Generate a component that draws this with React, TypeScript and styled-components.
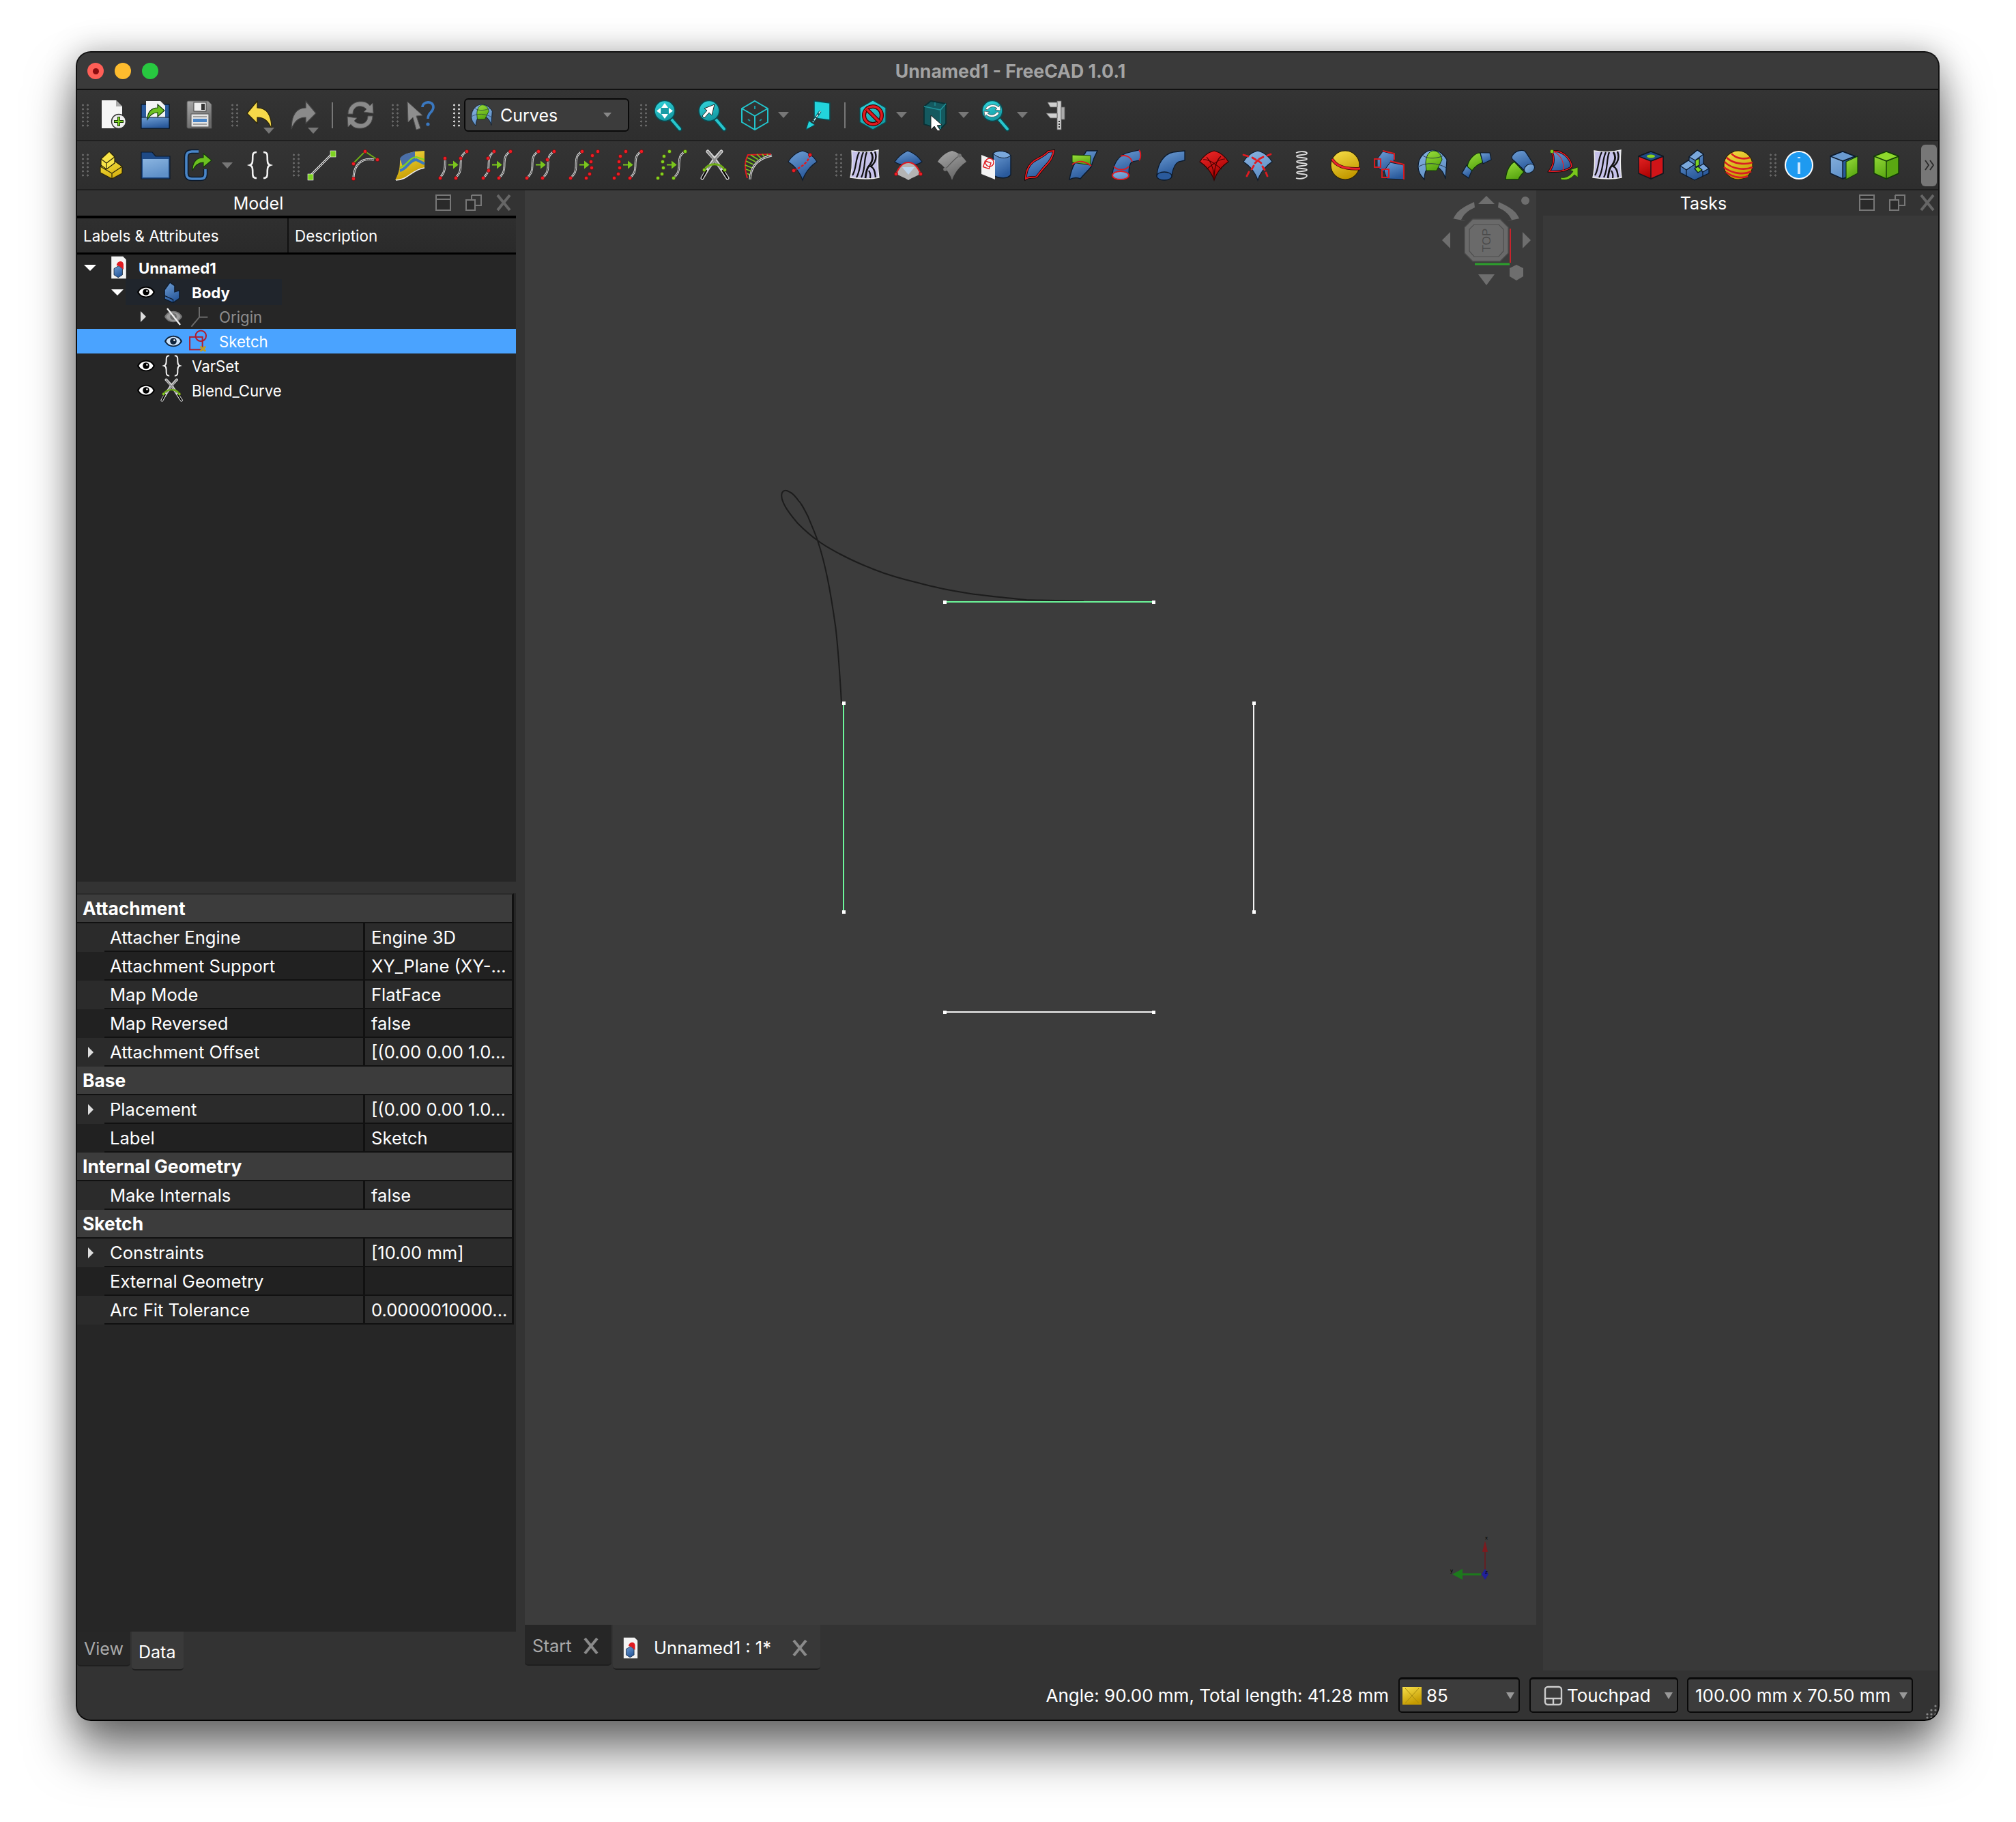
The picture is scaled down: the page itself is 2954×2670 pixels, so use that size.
import React from 'react';
import styled, { createGlobalStyle } from 'styled-components';

const GlobalStyle = createGlobalStyle`
    html, body {
        margin: 0;
        padding: 0;
        background: #fff;
    }
    body {
        font-family: Inter, "Liberation Sans", sans-serif;
        color: #fff;
    }
`;

const Page = styled.div`
    width: 2954px;
    height: 2670px;
    padding: 75px 0 0 111px;
    box-sizing: border-box;
    overflow: hidden;
`;

const Window = styled.div`
    position: relative;
    width: 2731px;
    height: 2447px;
    box-sizing: border-box;
    display: flex;
    flex-direction: column;
    background: #333;
    border: 2px solid #111;
    border-bottom-color: #000;
    border-radius: 22px;
    overflow: hidden;
`;

const Shadow = styled.div`
    width: 2731px;
    height: 2447px;
    border-radius: 22px;
    box-shadow: 0 44px 70px rgba(0, 0, 0, 0.54), 0 0 46px rgba(0, 0, 0, 0.26);
`;

const TitleBar = styled.div`
    height: 53px;
    flex: none;
    display: flex;
    align-items: center;
    justify-content: center;
    position: relative;
    padding-left: 8px;
    background: #3a3a3a;
    border-bottom: 2px solid #111;
`;

const TitleText = styled.div`
    font-size: 26.6px;
    font-weight: 700;
    color: #a3a3a3;
`;

const Lights = styled.div`
    position: absolute;
    left: 15px;
    top: 15px;
    display: flex;
    gap: 16px;
`;

const Light = styled.div<{ $c: string }>`
    width: 24px;
    height: 24px;
    border-radius: 50%;
    background: ${(p) => p.$c};
    display: flex;
    align-items: center;
    justify-content: center;
`;

const LightDot = styled.div`
    width: 9px;
    height: 9px;
    border-radius: 50%;
    background: #8c0c10;
`;

const Toolbar = styled.div<{ $h: number }>`
    height: ${(p) => p.$h}px;
    flex: none;
    display: flex;
    align-items: center;
    background: linear-gradient(#343434, #2e2e2e);
    border-bottom: 2px solid #1f1f1f;
    box-sizing: border-box;
    padding-right: 2px;
`;

const Grip = styled.div<{ $ml?: number; $bright?: boolean }>`
    flex: none;
    width: 10px;
    height: 36px;
    margin: 0 1px 0 ${(p) => p.$ml ?? 16}px;
    background-image: radial-gradient(circle at 1.5px 3px, ${(p) => (p.$bright ? '#ccc' : '#666')} 1.4px, transparent 1.7px),
        radial-gradient(circle at 8.5px 3px, ${(p) => (p.$bright ? '#ccc' : '#666')} 1.4px, transparent 1.7px);
    background-size: 10px 6px;
`;

const ToolButton = styled.div<{ $w?: number; $ml?: number }>`
    flex: none;
    position: relative;
    width: ${(p) => p.$w ?? 64}px;
    margin-left: ${(p) => p.$ml ?? 0}px;
    height: 44px;
    display: flex;
    align-items: center;
    justify-content: center;
`;

const Icon = styled.svg<{ $s?: number }>`
    width: ${(p) => p.$s ?? 44}px;
    height: ${(p) => p.$s ?? 44}px;
    flex: none;
    overflow: visible;
`;

const DropSlot = styled.div<{ $w?: number }>`
    flex: none;
    width: ${(p) => p.$w ?? 26}px;
    display: flex;
`;

const DropArrow = styled.div`
    width: 0;
    height: 0;
    margin-left: 2px;
    border-left: 8px solid transparent;
    border-right: 8px solid transparent;
    border-top: 9px solid #777;
`;

const OverArrow = styled(DropArrow)<{ $l: number }>`
    position: absolute;
    left: ${(p) => p.$l}px;
    top: 40px;
    margin: 0;
`;

const VSep = styled.div<{ $ml: number; $mr: number }>`
    flex: none;
    width: 2px;
    height: 38px;
    background: #777;
    margin: 0 ${(p) => p.$mr}px 0 ${(p) => p.$ml}px;
`;

const WorkbenchCombo = styled.div`
    flex: none;
    width: 242px;
    height: 49px;
    margin-left: 5px;
    box-sizing: border-box;
    display: flex;
    align-items: center;
    gap: 11px;
    padding: 0 10px 0 8px;
    background: #3c3c3c;
    border: 2px solid #0a0a0a;
    border-radius: 6px;
    font-size: 25px;
`;

const ComboLabel = styled.div`
    flex: 1;
`;

const ComboArrow = styled.div`
    width: 0;
    height: 0;
    margin-right: 14px;
    border-left: 6px solid transparent;
    border-right: 6px solid transparent;
    border-top: 7px solid #888;
`;

const OverflowButton = styled.div`
    margin-left: auto;
    width: 23px;
    height: 61px;
    border-radius: 6px;
    background: #777;
    display: flex;
    align-items: center;
    justify-content: center;
`;

const Main = styled.div`
    flex: 1;
    min-height: 0;
    display: flex;
    margin-bottom: 72px;
`;

const LeftDock = styled.div`
    flex: none;
    width: 643px;
    display: flex;
    flex-direction: column;
`;

const CenterColumn = styled.div`
    flex: none;
    width: 1482px;
    margin-left: 13px;
    display: flex;
    flex-direction: column;
`;

const RightDock = styled.div`
    flex: none;
    width: 579px;
    margin-left: 10px;
    display: flex;
    flex-direction: column;
`;

const DockHeader = styled.div`
    flex: none;
    height: 37px;
    position: relative;
    display: flex;
    align-items: center;
    justify-content: center;
    font-size: 25px;
`;

const DockTitle = styled.div<{ $dx: number }>`
    margin-left: ${(p) => p.$dx}px;
`;

const DockButtons = styled.div<{ $r: number }>`
    position: absolute;
    right: ${(p) => p.$r}px;
    top: 6px;
    display: flex;
    gap: 20px;
`;

const TreeHeader = styled.div`
    flex: none;
    height: 50px;
    box-sizing: content-box;
    display: flex;
    border-top: 4px solid #000;
    border-bottom: 3px solid #000;
    background: linear-gradient(#2f2f2f, #2a2a2a);
    font-size: 22.4px;
`;

const TreeHeaderCell = styled.div<{ $w?: number }>`
    width: ${(p) => (p.$w ? `${p.$w}px` : 'auto')};
    flex: ${(p) => (p.$w ? 'none' : '1')};
    padding-left: 9px;
    box-sizing: border-box;
    display: flex;
    align-items: center;
    border-right: ${(p) => (p.$w ? '2px solid #111' : 'none')};
`;

const Tree = styled.div`
    flex: none;
    height: 919px;
    box-sizing: border-box;
    padding-top: 1px;
    background: #262626;
`;

const TreeRow = styled.div<{ $sel?: boolean }>`
    height: 36px;
    display: flex;
    align-items: center;
    background: ${(p) => (p.$sel ? '#4aa3ff' : 'transparent')};
    font-size: 22.2px;
`;

const TreeHighlight = styled.div<{ $on?: boolean }>`
    display: flex;
    align-items: center;
    height: 38px;
    width: ${(p) => (p.$on ? '229px' : 'auto')};
    background: ${(p) => (p.$on ? '#20252c' : 'transparent')};
`;

const ArrowSlot = styled.div<{ $ml: number }>`
    flex: none;
    width: 24px;
    margin-left: ${(p) => p.$ml}px;
    display: flex;
    justify-content: center;
`;

const TriDown = styled.div`
    width: 0;
    height: 0;
    border-left: 9px solid transparent;
    border-right: 9px solid transparent;
    border-top: 9px solid #fff;
`;

const TriRight = styled.div`
    width: 0;
    height: 0;
    border-top: 8px solid transparent;
    border-bottom: 8px solid transparent;
    border-left: 8px solid #ddd;
`;

const EyeSlot = styled.div<{ $ml: number }>`
    flex: none;
    width: 24px;
    margin-left: ${(p) => p.$ml}px;
    display: flex;
    justify-content: center;
`;

const TreeIconSlot = styled.div<{ $ml: number }>`
    flex: none;
    width: 36px;
    margin-left: ${(p) => p.$ml}px;
    display: flex;
    justify-content: center;
`;

const TreeLabel = styled.div<{ $bold?: boolean; $dim?: boolean }>`
    margin-left: 11px;
    font-weight: ${(p) => (p.$bold ? 700 : 400)};
    color: ${(p) => (p.$dim ? '#8c8c8c' : '#fff')};
`;

const PropPanel = styled.div`
    flex: 1;
    min-height: 0;
    margin-top: 17px;
    background: #262626;
`;

const PropTable = styled.div`
    width: 640px;
    box-sizing: border-box;
    border-top: 2px solid #2a2a2a;
    border-right: 3px solid #111;
    font-size: 25.6px;
`;

const GroupRow = styled.div`
    height: 42px;
    box-sizing: border-box;
    padding-left: 8px;
    display: flex;
    align-items: center;
    font-weight: 700;
    font-size: 26.4px;
    background: #3c3c3c;
    border-bottom: 2px solid #111;
`;

const PropRow = styled.div<{ $alt: boolean }>`
    height: 42px;
    display: flex;
    background: ${(p) => (p.$alt ? '#2b2b2b' : '#212121')};
`;

const PropGutter = styled.div`
    flex: none;
    width: 40px;
    display: flex;
    align-items: center;
    justify-content: center;
`;

const PropName = styled.div`
    flex: none;
    width: 382px;
    box-sizing: border-box;
    padding-left: 8px;
    display: flex;
    align-items: center;
    border-bottom: 2px solid #111;
    border-right: 3px solid #111;
`;

const PropValue = styled.div`
    flex: 1;
    padding-left: 9px;
    display: flex;
    align-items: center;
    white-space: nowrap;
    overflow: hidden;
    border-bottom: 2px solid #111;
`;

const TabStrip = styled.div`
    flex: none;
    height: 57px;
    display: flex;
    align-items: flex-start;
    gap: 2px;
`;

const DockTab = styled.div<{ $active?: boolean; $w: number }>`
    width: ${(p) => p.$w}px;
    height: ${(p) => (p.$active ? 57 : 51)}px;
    box-sizing: border-box;
    display: flex;
    align-items: center;
    padding-left: 10px;
    padding-top: ${(p) => (p.$active ? 4 : 0)}px;
    background: ${(p) => (p.$active ? '#3a3a3a' : '#272727')};
    border-bottom: 2px solid #1f1f1f;
    border-radius: 0 0 5px 5px;
    color: ${(p) => (p.$active ? '#fff' : '#aaa')};
    font-size: 25px;
`;

const Viewport = styled.div`
    flex: none;
    height: 2102px;
    position: relative;
    background: #3c3c3c;
`;

const SketchCanvas = styled.svg`
    display: block;
    width: 1482px;
    height: 2102px;
`;

const NavCubeBox = styled.svg`
    position: absolute;
    right: 1px;
    top: 4px;
    width: 145px;
    height: 150px;
`;

const AxisBox = styled.svg`
    position: absolute;
    left: 1350px;
    top: 1965px;
    width: 70px;
    height: 75px;
`;

const CenterTabs = styled.div`
    flex: none;
    height: 67px;
    display: flex;
    align-items: flex-start;
    gap: 2px;
`;

const DocTab = styled.div<{ $active?: boolean; $w: number }>`
    width: ${(p) => p.$w}px;
    height: ${(p) => (p.$active ? 66 : 60)}px;
    box-sizing: border-box;
    display: flex;
    align-items: center;
    padding: 3px 18px 0 ${(p) => (p.$active ? 10 : 11)}px;
    background: ${(p) => (p.$active ? '#383838' : '#262626')};
    border-bottom: 2px solid #1f1f1f;
    border-radius: 0 0 5px 5px;
    color: ${(p) => (p.$active ? '#fff' : '#aaa')};
    font-size: 25.6px;
`;

const DocTabLabel = styled.div<{ $ml?: number }>`
    flex: 1;
    margin-left: ${(p) => p.$ml ?? 0}px;
    white-space: nowrap;
`;

const TaskPane = styled.div`
    flex: none;
    height: 2132px;
    background: #393939;
`;

const StatusBar = styled.div`
    position: absolute;
    left: 0;
    right: 0;
    bottom: 0;
    height: 72px;
    display: flex;
    align-items: center;
    justify-content: flex-end;
    padding-right: 37px;
    font-size: 26px;
`;

const StatusText = styled.div`
    margin-right: 14px;
`;

const StatusCombo = styled.div<{ $w: number; $ml: number; $pl?: number }>`
    width: ${(p) => p.$w}px;
    margin-left: ${(p) => p.$ml}px;
    height: 52px;
    box-sizing: border-box;
    display: flex;
    align-items: center;
    gap: 5px;
    padding: 0 6px 0 ${(p) => p.$pl ?? 4}px;
    background: #3c3c3c;
    border: 2px solid #0a0a0a;
    border-top-width: 3px;
    border-radius: 5px;
`;

const ComboValue = styled.div<{ $pl?: number }>`
    flex: 1;
    padding-left: ${(p) => p.$pl ?? 0}px;
    white-space: nowrap;
`;

const StatusArrow = styled.div`
    width: 0;
    height: 0;
    border-left: 6px solid transparent;
    border-right: 6px solid transparent;
    border-top: 10px solid #999;
`;

const ResizeGrip = styled.svg`
    position: absolute;
    right: 0;
    bottom: 0;
    width: 26px;
    height: 26px;
`;

const HiddenDefs = styled.svg`
    position: absolute;
    width: 0;
    height: 0;
`;

const grads: [string, string, string][] = [
    ['gBlue', '#6f9fd6', '#2a5a9c'],
    ['gLight', '#8ab4e0', '#5f90c8'],
    ['gGreen', '#9adf3c', '#5aa812'],
    ['gYellow', '#f8e04a', '#c49a00'],
    ['gPart', '#f8e448', '#d8b410'],
    ['gRed', '#f02a2a', '#a80000'],
    ['gGray', '#a8a8a8', '#6a6a6a'],
    ['gCyan', '#34d8de', '#149aa4'],
];

const Defs = () => (
    <HiddenDefs>
        <defs>
            {grads.map(([id, a, b]) => (
                <linearGradient key={id} id={id} x1="0" y1="0" x2="0.4" y2="1">
                    <stop offset="0" stopColor={a} />
                    <stop offset="1" stopColor={b} />
                </linearGradient>
            ))}
        </defs>
    </HiddenDefs>
);

const DK = '#0c1a2c';
const BLADE = 'M22 1 C30 3 38 9 43 17 C34 23 26 32 22 44 C18 32 10 23 1 17 C6 9 14 3 22 1Z';

const Wire = ({ d }: { d: string }) => (
    <>
        <path d={d} fill="none" stroke="#e4e4e4" strokeWidth={2.8} />
        <path d={d} fill="none" stroke="#333" strokeWidth={1} />
    </>
);

const Pt = ({ x, y, c = '#ee1c24' }: { x: number; y: number; c?: string }) => (
    <circle cx={x} cy={y} r={2.7} fill={c} stroke="#3a0a0a" strokeWidth={0.5} />
);

const GreenArrow = () => (
    <path d="M15 21.5 H24 M23 17.5 L28 21.5 L23 25.5Z" stroke="#7ac61c" strokeWidth={2} fill="#7ac61c" />
);

const LEFT_S = 'M2 41 C9 34 10 30 10 23 C10 12 11 6 19 2';
const RIGHT_S = 'M25 41 C32 34 33 30 33 23 C33 12 34 6 42 2';

const approx = (wires: string[], pts: number[][], c?: string) => (
    <>
        {wires.map((d) => (
            <Wire key={d} d={d} />
        ))}
        <GreenArrow />
        {pts.map(([x, y]) => (
            <Pt key={`${x}-${y}`} x={x} y={y} c={c} />
        ))}
    </>
);

const Cube = ({ top, left, right, s = DK }: { top: string; left: string; right: string; s?: string }) => (
    <g stroke={s} strokeWidth={1.4} strokeLinejoin="round">
        <path d="M22 2 L40 9 L40 34 L22 42 L4 34 L4 9Z" fill={left} />
        <path d="M22 16 L40 9 L40 34 L22 42Z" fill={right} />
        <path d="M22 2 L40 9 L22 16 L4 9Z" fill={top} />
    </g>
);

const Magnifier = ({ children }: { children?: React.ReactNode }) => (
    <>
        <path d="M30 28 L42 42" stroke="#0b4a50" strokeWidth={7} strokeLinecap="round" />
        <path d="M30 28 L42 42" stroke="#28c6ce" strokeWidth={4} strokeLinecap="round" />
        <ellipse cx="20" cy="15.5" rx="15" ry="15" fill="url(#gCyan)" stroke="#0b4a50" strokeWidth={1.6} />
        {children}
    </>
);

const Sphere = ({ children }: { children?: React.ReactNode }) => (
    <>
        <circle cx="22" cy="22" r="21" fill="url(#gYellow)" stroke="#2c2408" strokeWidth={1.2} />
        {children}
    </>
);

const Zebra = () => (
    <>
        <path
            d="M3 1 C14 3 30 3 42 0 C41 14 41 28 43 40 C30 43 14 42 1 40 C4 28 4 14 3 1Z"
            fill="#c6c2ea"
            stroke="#eee"
            strokeWidth={1.4}
        />
        <g fill="none" stroke="#111" strokeWidth={2.2}>
            <path d="M14 3 C8 14 10 28 4 37" />
            <path d="M20 3 C14 16 17 28 10 40" />
            <path d="M25 3 C20 16 24 26 17 40" />
            <path d="M31 3 C36 10 33 18 27 25 C24 30 24 36 23 41" strokeWidth={2.8} />
            <path d="M37 2 C40 10 38 18 31 24 C36 26 37 32 38 40" strokeWidth={2.4} />
            <path d="M30 41 C31 36 30 33 28 30" />
        </g>
    </>
);

const Doc = () => (
    <>
        <path d="M8 1 H30 L36 7 V43 H8Z" fill="#f4f4f4" />
        <path d="M13 24 L22 19 L29 24 V36 L21 41 L13 36Z" fill="url(#gBlue)" stroke={DK} strokeWidth={1} />
        <path d="M18 18 C18 10 30 7 31 16 L31 26 L24 20Z" fill="#e01a20" />
    </>
);

const Braces = () => (
    <path
        d="M17 3 C9 3 12 10 11 16 C11 19 10 21 7 22 C10 23 11 25 11 28 C12 34 9 41 17 41 M27 3 C35 3 32 10 33 16 C33 19 34 21 37 22 C34 23 33 25 33 28 C32 34 35 41 27 41"
        fill="none"
        stroke="#f2f2f2"
        strokeWidth={2.6}
    />
);

const BlendX = () => (
    <>
        <g fill="none" strokeLinecap="round">
            <path d="M31 2 L21 13 L12 26 L3 41" stroke="#d8d8d8" strokeWidth={5} />
            <path d="M11 2 L21 13 L30 26 L40 41" stroke="#d8d8d8" strokeWidth={5} />
            <path d="M31 2 L12 26" stroke="#8e8e8e" strokeWidth={2.4} />
            <path d="M11 2 L30 26" stroke="#8e8e8e" strokeWidth={2.4} />
            <path d="M9 30 L3 41" stroke="#000" strokeWidth={2.4} />
            <path d="M33 30 L40 41" stroke="#000" strokeWidth={2.4} />
        </g>
        <path d="M6 29 C12 18 30 18 36 29" fill="none" stroke="#6fae16" strokeWidth={3} />
        <Pt x={6} y={29} c="#7ed321" />
        <Pt x={36} y={29} c="#7ed321" />
    </>
);

const ICONS: Record<string, React.ReactNode> = {
    new: (
        <>
            <path d="M8 0 H29 L38 9 V41 H8Z" fill="#f6f6f6" />
            <path d="M29 0 L38 9 H29Z" fill="#aaa" />
            <circle cx="33" cy="31" r="10.5" fill="#efefef" stroke="#333" strokeWidth={1.4} />
            <path d="M33 24 V38 M26 31 H40" stroke="#1a3a0a" strokeWidth={4} />
            <path d="M33 25 V37 M27 31 H39" stroke="#7ed321" strokeWidth={2.2} />
        </>
    ),
    open: (
        <>
            <rect x="2" y="6" width="41" height="35" fill="#2a5a9c" stroke={DK} strokeWidth={1.4} />
            <path d="M9 1 H30 L37 8 V27 H9Z" fill="#f4f4f4" />
            <path d="M2 25 H43 V41 H2Z" fill="url(#gBlue)" stroke={DK} strokeWidth={1.2} />
            <path
                d="M11 28 C11 16 18 11 26 11 V6 L36 15 L26 24 V18 C20 18 15 21 11 28Z"
                fill="#6cc020"
                stroke="#123a08"
                strokeWidth={1.2}
            />
        </>
    ),
    save: (
        <>
            <path d="M7 1 H36 L41 6 V41 H7 Q5 41 5 39 V3 Q5 1 7 1Z" fill="url(#gGray)" stroke="#555" />
            <rect x="15" y="3" width="18" height="13" fill="#eee" stroke="#444" />
            <rect x="26" y="5" width="5" height="9" fill="#333" />
            <rect x="11" y="20" width="26" height="19" fill="#e4e4e4" stroke="#555" />
            <path d="M14 24 H34 M14 35 H34" stroke="#888" strokeWidth={1.4} />
            <rect x="14" y="27" width="20" height="5" fill="#4a86c8" />
        </>
    ),
    undo: (
        <path
            d="M3 19 L18 1 V11 C32 11 39 22 39 42 C34 30 28 25 18 25 V34Z"
            fill="#f6d94a"
            stroke="#2a2408"
            strokeWidth={1.2}
            strokeLinejoin="round"
        />
    ),
    redo: (
        <path
            d="M42 19 L27 1 V11 C13 11 6 22 6 42 C11 30 17 25 27 25 V34Z"
            fill="#8a8a8a"
            stroke="#444"
            strokeWidth={1.2}
            strokeLinejoin="round"
        />
    ),
    refresh: (
        <g fill="#8a8a8a" stroke="#555" strokeWidth={1}>
            <path d="M4 20 C4 8 14 1 24 2 C30 2 34 5 36 8 L40 4 L41 19 L27 17 L31 13 C28 9 22 8 18 9 C13 11 11 15 11 20Z" />
            <path d="M40 23 C40 35 30 42 20 41 C14 41 10 38 8 35 L4 39 L3 24 L17 26 L13 30 C16 34 22 35 26 34 C31 32 33 28 33 23Z" />
        </g>
    ),
    whats: (
        <>
            <path d="M2 2 L24 22 L15 23 L21 41 L15 43 L10 25 L3 32Z" fill="#8e8e8e" stroke="#555" strokeWidth={1} />
            <path d="M24 10 C24 1 40 0 40 10 C40 18 32 17 32 27" fill="none" stroke="#3a78c0" strokeWidth={3.6} />
            <circle cx="32" cy="35" r="2.6" fill="#3a78c0" />
        </>
    ),
    fit: (
        <Magnifier>
            <path d="M20 4 L25 11 H15Z M20 27 L25 20 H15Z M8 15.5 L14 11 V20Z M32 15.5 L26 11 V20Z" fill="#fff" />
            <rect x="15" y="11" width="10" height="9" fill="#1a9aa4" />
        </Magnifier>
    ),
    zoomsel: (
        <Magnifier>
            <path d="M28 6 L13 12 L17 15 L10 23 L13 26 L20 18 L24 22Z" fill="#fff" stroke="#222" strokeWidth={1} />
        </Magnifier>
    ),
    isocube: (
        <g fill="none" stroke="#22c4cc" strokeWidth={2}>
            <path d="M22 1 L41 12 L41 32 L22 43 L3 32 L3 12Z" />
            <path d="M22 23 L3 12 M22 23 L41 12 M22 23 V43" />
            <path d="M22 8 V13 M12 28 L15 30 M32 28 L29 30" stroke="#1a9aa4" />
        </g>
    ),
    plane: (
        <>
            <path d="M18 1 L41 4 L41 29 L18 26Z" fill="#22d4dc" stroke="#0b4a50" strokeWidth={1.6} />
            <path d="M27 16 L16 32" stroke="#0b4a50" strokeWidth={3.6} />
            <path d="M27 16 L16 32" stroke="#d8f4f6" strokeWidth={1.6} strokeDasharray="4 2" />
            <path d="M6 43 L10 30 L19 36Z" fill="#22d4dc" stroke="#0b4a50" />
        </>
    ),
    draw: (
        <>
            <path d="M22 0 L41 11 L41 32 L22 43 L3 32 L3 11Z" fill="url(#gCyan)" stroke="#0b4a50" strokeWidth={1.4} />
            <circle cx="22" cy="22" r="13" fill="none" stroke="#400" strokeWidth={6} />
            <circle cx="22" cy="22" r="13" fill="none" stroke="#e01a20" strokeWidth={3.6} />
            <path d="M13 13 L31 31" stroke="#400" strokeWidth={6} />
            <path d="M13 13 L31 31" stroke="#e01a20" strokeWidth={3.6} />
        </>
    ),
    selbox: (
        <>
            <path d="M6 9 L16 1 L38 5 L38 34 L30 42 L6 35Z" fill="#14595f" stroke="#0a3034" strokeWidth={1.8} />
            <path d="M6 9 L30 14 L38 5 M30 14 V42" fill="none" stroke="#1f9098" strokeWidth={1.6} />
            <path d="M22 3 L22 8" stroke="#1f9098" strokeWidth={1.4} />
            <path d="M16 22 L32 36 L25 37 L30 44 L26 45 L21 38 L16 43Z" fill="#fff" stroke="#222" />
        </>
    ),
    zoomre: (
        <Magnifier>
            <path d="M10 13 C12 6 24 4 29 10 L31 7 L32 15 L24 14 L27 12 C23 8 16 9 13 14Z" fill="#fff" stroke="#333" strokeWidth={0.6} />
            <path d="M30 18 C28 25 16 27 11 21 L9 24 L8 16 L16 17 L13 19 C17 23 24 22 27 17Z" fill="#fff" stroke="#333" strokeWidth={0.6} />
        </Magnifier>
    ),
    measure: (
        <g fill="#cfcfcf" stroke="#666" strokeWidth={0.8}>
            <rect x="24" y="1" width="6" height="42" />
            <path d="M10 3 H24 V10 H14Z" />
            <path d="M8 19 H24 V26 H14Z" />
            <rect x="30" y="10" width="5" height="18" fill="#aaa" />
            <path d="M27 30 V41" stroke="#333" strokeWidth={2} strokeDasharray="2 2" />
        </g>
    ),
    part: (
        <g stroke="#2a2408" strokeWidth={1.2} strokeLinejoin="round">
            <path d="M6 24 L24 14 L38 24 L38 34 L23 42 L6 33Z" fill="url(#gPart)" />
            <path d="M6 24 L23 34 L38 24 M23 34 V42" fill="none" />
            <path d="M7 13 L19 2 L27 10 L27 19 L15 28 L7 22Z" fill="#f8e448" />
            <path d="M7 13 L15 19 L27 10 M15 19 V28" fill="none" />
        </g>
    ),
    group: (
        <>
            <path d="M2 3 H18 L23 9 H44 V42 H2Z" fill="#1e4a86" stroke={DK} strokeWidth={1.2} />
            <path d="M4 13 H42 V40 H4Z" fill="url(#gLight)" />
        </>
    ),
    link: (
        <>
            <path d="M22 2 H12 Q4 2 4 10 V34 Q4 42 12 42 H25 Q32 42 32 35 V28" fill="none" stroke={DK} strokeWidth={6.5} />
            <path d="M22 2 H12 Q4 2 4 10 V34 Q4 42 12 42 H25 Q32 42 32 35 V28" fill="none" stroke="#4a86c8" strokeWidth={3.6} />
            <path
                d="M13 30 C13 16 20 11 29 11 V5 L41 15 L29 25 V18 C22 18 17 22 13 30Z"
                fill="#6cc020"
                stroke="#123a08"
                strokeWidth={1.1}
            />
        </>
    ),
    braces: <Braces />,
    line: (
        <>
            <path d="M4 38 L36 6" stroke="#e8e8e8" strokeWidth={2.8} />
            <path d="M4 38 L36 6" stroke="#333" strokeWidth={1} />
            <rect x="34" y="1" width="8" height="9" fill="#7ed321" stroke="#fff" strokeWidth={0.6} />
            <rect x="1" y="35" width="8" height="9" fill="#7ed321" stroke="#fff" strokeWidth={0.6} />
        </>
    ),
    arc: (
        <>
            <path d="M3 20 L21 2 L39 14" fill="none" stroke="#6fae16" strokeWidth={1.8} />
            <path d="M4 42 C4 22 16 10 34 14" fill="none" stroke="#e4e4e4" strokeWidth={3} />
            <path d="M4 42 C4 22 16 10 34 14" fill="none" stroke="#333" strokeWidth={1} />
            <Pt x={4} y={20} />
            <Pt x={21} y={2} />
            <Pt x={39} y={14} />
            <Pt x={4} y={42} />
        </>
    ),
    surfcurve: (
        <>
            <path d="M8 16 C10 6 22 4 30 2 L44 1 V26 C26 26 22 44 1 44 C6 34 8 28 8 16Z" fill="url(#gYellow)" />
            <path d="M8 12 C14 4 24 4 30 2 L30 14 L12 24Z" fill="#4a6fa8" />
            <path d="M8 30 C18 28 22 14 32 14 L44 20" fill="none" stroke="#3a78c0" strokeWidth={4} />
            <path d="M8 25 C18 24 22 10 32 10 L44 14" fill="none" stroke="#7ed321" strokeWidth={2.2} />
            <path d="M2 44 C20 44 26 28 44 26" fill="none" stroke="#eee" strokeWidth={1.6} />
        </>
    ),
    ap1: approx(['M2 41 C8 35 11 30 10 12', RIGHT_S], [[3, 41], [10, 12], [26, 41], [33, 12], [42, 2]]),
    ap2: approx([LEFT_S, RIGHT_S], [[2, 41], [10, 30], [9, 12], [18, 2], [25, 41], [42, 2]]),
    ap3: approx([LEFT_S, RIGHT_S], [[2, 41], [19, 2], [25, 41], [32, 14], [42, 2]]),
    ap4: approx([LEFT_S], [[2, 41], [19, 2], [25, 41], [30, 35], [33, 26], [32, 17], [34, 8], [42, 2]]),
    ap5: approx([RIGHT_S], [[2, 41], [8, 35], [10, 26], [9, 17], [11, 9], [19, 2], [25, 41], [42, 2]]),
    ap6: approx([RIGHT_S], [[2, 41], [8, 35], [10, 26], [9, 17], [11, 9], [19, 2], [25, 41], [42, 2]], '#7ed321'),
    blend: <BlendX />,
    comb: (
        <>
            <path d="M5 41 C1 28 1 16 6 7 L40 6" fill="none" stroke="#e01a20" strokeWidth={2} />
            <g stroke="#7ac61c" strokeWidth={1.7}>
                <path d="M5 34 L11 38 M3 28 L11 31 M2 22 L12 26 M3 16 L14 21 M5 11 L17 17 M10 7 L21 14 M19 6 L25 12 M27 6 L30 10 M34 6 L35 8" />
            </g>
            <path d="M9 43 C10 24 20 12 41 8" fill="none" stroke="#e4e4e4" strokeWidth={3} />
            <path d="M9 43 C10 24 20 12 41 8" fill="none" stroke="#333" strokeWidth={1} />
        </>
    ),
    onsurf: (
        <>
            <path d={BLADE} fill="url(#gBlue)" stroke={DK} strokeWidth={1.2} />
            <path d="M33 7 C30 18 22 24 9 30" fill="none" stroke="#e01a20" strokeWidth={2.4} strokeDasharray="4 2" />
            <Pt x={33} y={7} />
            <Pt x={9} y={30} />
        </>
    ),
    zebra: <Zebra />,
    sectorA: (
        <>
            <path d="M21 1 C30 4 37 10 42 17 C34 24 10 24 2 17 C7 10 14 4 21 1Z" fill="url(#gBlue)" stroke={DK} strokeWidth={1.2} />
            <path d="M4 35 C8 25 14 18 22 18 C30 18 36 25 40 35 C34 38 28 40 22 44 C16 40 10 38 4 35Z" fill="#b4b4b4" />
            <path d="M13 25 H31 L22 36Z" fill="#bcd4ec" />
            <path d="M4 35 C8 25 14 18 22 18 C30 18 36 25 40 35" fill="none" stroke="#e01a20" strokeWidth={2.2} />
            <Pt x={4} y={35} />
            <Pt x={40} y={35} />
        </>
    ),
    sectorGray: (
        <>
            <path d={BLADE} fill="url(#gGray)" />
            <path d="M12 28 C18 22 26 12 33 8" fill="none" stroke="#555" strokeWidth={1.2} />
            <circle cx="33" cy="8" r="2.8" fill="#777" />
            <circle cx="12" cy="28" r="2.8" fill="#777" />
        </>
    ),
    sheetcyl: (
        <>
            <path d="M18 5 C24 -1 40 1 44 8 V36 C40 42 28 42 20 38Z" fill="url(#gBlue)" stroke={DK} strokeWidth={1.4} />
            <path d="M18 5 C24 -1 40 1 44 8 C36 14 26 12 18 5Z" fill="#7aa8dc" stroke={DK} strokeWidth={1} />
            <path d="M1 7 L21 15 V43 L1 35Z" fill="#f4f4f4" />
            <rect x="5" y="17" width="9" height="9" fill="none" stroke="#e01a20" strokeWidth={1.4} transform="rotate(18 9 21)" />
            <circle cx="13" cy="18" r="6" fill="none" stroke="#e01a20" strokeWidth={1.4} />
        </>
    ),
    leaf: (
        <>
            <path
                d="M2 42 C2 30 6 22 14 16 C24 10 30 8 35 2 L43 1 C42 8 38 16 32 22 C26 28 22 34 18 39 C14 41 8 38 2 42Z"
                fill="url(#gBlue)"
                stroke="#100"
                strokeWidth={3.4}
            />
            <path
                d="M2 42 C2 30 6 22 14 16 C24 10 30 8 35 2 L43 1 C42 8 38 16 32 22 C26 28 22 34 18 39 C14 41 8 38 2 42Z"
                fill="none"
                stroke="#ee1c24"
                strokeWidth={1.9}
            />
        </>
    ),
    band: (
        <>
            <path
                d="M27 1 L43 1 C38 10 36 16 34 24 C30 30 24 34 18 42 C14 40 8 40 2 43 C4 32 6 24 12 16 C18 12 24 8 27 1Z"
                fill="url(#gBlue)"
                stroke={DK}
                strokeWidth={1.4}
            />
            <path d="M6 7 L33 8 L33 22 L6 18Z" fill="url(#gGreen)" stroke="#123a08" />
            <path d="M6 21 C16 14 24 16 34 23" fill="none" stroke="#e01a20" strokeWidth={1.8} />
        </>
    ),
    ringpipe: (
        <>
            <path d="M1 36 C2 20 10 6 27 3 L40 0 C43 3 43 12 40 15 L30 17 C25 20 25 30 25 37Z" fill="url(#gBlue)" stroke={DK} strokeWidth={1.2} />
            <ellipse cx="13" cy="37" rx="12" ry="6" fill="url(#gLight)" stroke="#e01a20" strokeWidth={1.9} />
            <path d="M3 24 C8 30 20 30 25 24" fill="none" stroke="#e01a20" strokeWidth={1.9} />
            <path d="M13 9 C20 6 28 10 30 17" fill="none" stroke="#e01a20" strokeWidth={1.9} />
            <path d="M40 0 C43 3 43 12 40 15" fill="none" stroke="#e01a20" strokeWidth={1.9} />
        </>
    ),
    pipe: (
        <>
            <path d="M2 38 C3 20 12 6 26 3 L43 1 L43 15 L34 17 C28 20 25 30 24 38Z" fill="url(#gBlue)" stroke={DK} strokeWidth={1.3} />
            <ellipse cx="13" cy="38" rx="11" ry="6" fill="#2a5a9c" stroke={DK} strokeWidth={1.3} />
        </>
    ),
    redgrid: (
        <>
            <path d={BLADE} fill="url(#gRed)" stroke="#300" strokeWidth={1.2} />
            <path d="M11 10 C18 18 22 30 22 43 M32 9 C24 16 22 28 22 43 M6 14 C16 12 30 26 33 28 M38 13 C28 12 14 26 11 28" fill="none" stroke="#400" strokeWidth={1.1} />
        </>
    ),
    dashblade: (
        <>
            <path d={BLADE} fill="url(#gLight)" stroke={DK} strokeWidth={1.2} />
            <g stroke="#e01a20" strokeWidth={2.8} strokeLinecap="round">
                <path d="M1 7 L8 9 M14 11 L19 14 M24 13 L30 10 M36 8 L41 6 M18 19 L22 15 M22 15 L27 19" fill="none" />
                <path d="M9 32 L6 38 M16 23 L13 28 M29 24 L32 29 M34 33 L36 38" fill="none" />
            </g>
        </>
    ),
    spring: (
        <path
            d="M14 4 C20 1 31 2 30 5 C29 8 15 6 15 9 C15 12 30 10 30 13 C30 16 15 14 15 17 C15 20 30 18 30 21 C30 24 15 22 15 25 C15 28 30 26 30 29 C30 32 15 30 15 33 C15 36 30 34 30 37 C30 41 20 43 14 41"
            fill="none"
            stroke="#e0e0e0"
            strokeWidth={1.8}
        />
    ),
    sphereband: (
        <Sphere>
            <path d="M3 13 C10 26 28 28 44 27" fill="none" stroke="#3a0606" strokeWidth={4.6} />
            <path d="M3 13 C10 26 28 28 44 27" fill="none" stroke="#e8242c" strokeWidth={3} />
        </Sphere>
    ),
    blocks: (
        <>
            <g stroke={DK} strokeWidth={1}>
                <path d="M5 13 L13 2 L30 6 L29 20 L16 33 L5 25Z" fill="url(#gBlue)" />
                <path d="M15 30 L24 18 L44 22 L44 43 L19 42Z" fill="url(#gBlue)" />
            </g>
            <g fill="none" stroke="#e01a20" strokeWidth={1.9}>
                <path d="M13 1 L30 5 V14" />
                <rect x="1" y="13" width="9" height="12" />
                <path d="M24 16 L44 21 V43" />
                <rect x="12" y="28" width="10" height="12" />
            </g>
        </>
    ),
    wings: (
        <>
            <path d="M1 24 C1 10 12 0 22 0 C32 0 40 8 43 14 L41 42 C38 30 32 24 22 22 C14 24 10 32 10 43 C4 36 1 32 1 24Z" fill="url(#gLight)" stroke={DK} strokeWidth={1.2} />
            <path d="M12 20 C12 10 16 1 24 1 C32 2 35 8 36 14 L28 30 C24 30 16 30 13 30Z" fill="url(#gGreen)" stroke="#123a08" strokeWidth={1} />
            <path d="M2 24 C12 18 30 18 42 26 M8 8 C16 14 30 12 38 8" fill="none" stroke="#234" strokeWidth={0.9} />
        </>
    ),
    elbow: (
        <>
            <path d="M1 34 L8 22 L16 29 L11 41Z" fill="url(#gBlue)" stroke={DK} strokeWidth={1.2} />
            <path d="M9 24 C11 12 21 4 28 4 L32 18 C26 20 20 24 16 30Z" fill="url(#gGreen)" stroke="#123a08" strokeWidth={1.2} />
            <path d="M28 4 L42 4 L44 14 L32 20Z" fill="url(#gBlue)" stroke={DK} strokeWidth={1.2} />
        </>
    ),
    cone: (
        <>
            <path d="M1 43 C2 30 8 20 14 17 L28 32 C24 36 21 40 20 43Z" fill="url(#gGreen)" stroke="#123a08" strokeWidth={1.4} />
            <path d="M11 8 C16 0 26 -1 30 2 L43 22 L30 31 L14 16 C10 13 9 11 11 8Z" fill="url(#gBlue)" stroke={DK} strokeWidth={1.3} />
            <ellipse cx="36" cy="27" rx="8" ry="6" fill="url(#gLight)" stroke={DK} transform="rotate(-34 36 27)" />
        </>
    ),
    rev: (
        <>
            <path d="M5 2 C18 -1 32 10 34 24 C28 30 16 32 1 31 C8 22 9 12 5 2Z" fill="url(#gBlue)" stroke="#100" strokeWidth={3} />
            <path d="M5 2 C18 -1 32 10 34 24 C28 30 16 32 1 31 C8 22 9 12 5 2Z" fill="none" stroke="#ee1c24" strokeWidth={1.6} />
            <path d="M8 2 C18 8 24 18 21 31" fill="none" stroke="#ee1c24" strokeWidth={1.3} />
            <Pt x={5} y={2} c="#7ed321" />
            <path d="M18 40 C26 42 33 36 36 31 L31 29 L43 25 L43 40 L38 36 C33 42 26 45 18 43Z" fill="#7ac61c" stroke="#123a08" strokeWidth={0.8} />
        </>
    ),
    redbox: (
        <>
            <Cube top="#1e4a86" left="url(#gRed)" right="#d01418" s="#101820" />
            <ellipse cx="22" cy="9" rx="6" ry="2.6" fill="#8ad41e" />
        </>
    ),
    stairs: (
        <g stroke={DK} strokeWidth={1.3} strokeLinejoin="round">
            <path d="M1 23 L14 14 L14 10 L26 0 L35 6 L35 20 L43 27 L43 34 L22 44 L1 33Z" fill="url(#gBlue)" />
            <path d="M1 23 L13 15 L22 21 L10 29Z" fill="#7aa8dc" />
            <path d="M14 10 L26 0 L35 6 L23 15Z" fill="#7aa8dc" />
            <path d="M27 25 L35 20 L43 27 L34 32Z" fill="#7aa8dc" />
            <path d="M10 29 V39 M34 32 V38" fill="none" />
            <path d="M23 15 L29 12 V22 L23 25Z" fill="#7ed321" />
            <path d="M22 27 L27 24 L33 29 L27 33Z" fill="#7ed321" />
        </g>
    ),
    stripedball: (
        <Sphere>
            <g fill="none" stroke="#d81c24" strokeWidth={2.6}>
                <path d="M12 5 C18 12 30 14 39 11" />
                <path d="M5 11 C14 20 32 22 43 18" />
                <path d="M2 17 C12 28 32 30 43 25" />
                <path d="M1 25 C12 34 30 37 41 31" />
                <path d="M4 32 C14 40 28 42 36 38" />
            </g>
        </Sphere>
    ),
    info: (
        <>
            <circle cx="22" cy="22" r="21" fill="#fff" />
            <circle cx="22" cy="22" r="19" fill="#1e9af0" />
            <path d="M22 10 V12 M22 18 V35" stroke="#cfe8ff" strokeWidth={4} />
        </>
    ),
    cubeGreen: (
        <>
            <Cube top="#6a9ad0" left="url(#gLight)" right="#2a5a9c" />
            <path d="M27 17 L44 9 V34 L27 43Z" fill="url(#gGreen)" stroke="#123a08" strokeWidth={1.2} />
        </>
    ),
    greenCube: <Cube top="#8ed82c" left="url(#gGreen)" right="#5aa812" s="#123a08" />,
    bodyIcon: (
        <g stroke={DK} strokeWidth={1.6}>
            <path d="M8 18 L18 4 L27 10 V22 L36 19 V34 L24 42 L8 35Z" fill="url(#gBlue)" />
            <path d="M8 29 L24 36 V42" fill="none" />
        </g>
    ),
    doc: <Doc />,
    origin: (
        <g stroke="#6a6a6a" strokeWidth={2.6} fill="none">
            <path d="M22 4 V23 H38 M22 23 L7 41" />
        </g>
    ),
    sketchIcon: (
        <g fill="none" stroke="#b01c2c" strokeWidth={2.6}>
            <rect x="4" y="14" width="24" height="24" />
            <circle cx="25" cy="12" r="10" />
            <path d="M24 32 L34 41 M34 32 L24 41" stroke="#c0a020" strokeWidth={3.6} />
        </g>
    ),
};

const ToolIcon = ({ name, s }: { name: string; s?: number }) => (
    <Icon $s={s} viewBox="0 0 44 44">
        {ICONS[name]}
    </Icon>
);

const renderTools = (items: string[]) =>
    items.map((item, i) => {
        if (item === 'grip') return <Grip key={i} $ml={i === 0 ? 7 : undefined} />;
        if (item === 'drop')
            return (
                <DropSlot key={i}>
                    <DropArrow />
                </DropSlot>
            );
        return (
            <ToolButton key={i}>
                <ToolIcon name={item} />
            </ToolButton>
        );
    });

const ROW2 = [
    'grip', 'part', 'group', 'link', 'drop', 'braces',
    'grip', 'line', 'arc', 'surfcurve', 'ap1', 'ap2', 'ap3', 'ap4', 'ap5', 'ap6', 'blend', 'comb', 'onsurf',
    'grip', 'zebra', 'sectorA', 'sectorGray', 'sheetcyl', 'leaf', 'band', 'ringpipe', 'pipe', 'redgrid', 'dashblade',
    'spring', 'sphereband', 'blocks', 'wings', 'elbow', 'cone', 'rev', 'zebra', 'redbox', 'stairs', 'stripedball',
];

const ROW2_END = ['info', 'cubeGreen', 'greenCube'];

const CloseX = ({ c = '#666' }: { c?: string }) => (
    <Icon $s={24} viewBox="0 0 24 24">
        <path d="M3 1 L21 23 M21 1 L3 23" stroke={c} strokeWidth={4} />
    </Icon>
);

const DockControls = ({ right }: { right: number }) => (
    <DockButtons $r={right}>
        <Icon $s={24} viewBox="0 0 24 24">
            <path d="M1 1 H22 V23 H1Z M1 7 H22" fill="#2a2a2a" stroke="#777" strokeWidth={2} />
        </Icon>
        <Icon $s={24} viewBox="0 0 24 24">
            <path d="M9 1 H23 V16 H15 M9 1 V7" fill="none" stroke="#777" strokeWidth={2} />
            <path d="M1 8 H14 V23 H1Z" fill="#2a2a2a" stroke="#777" strokeWidth={2} />
        </Icon>
        <CloseX />
    </DockButtons>
);

const Eye = ({ off, dark }: { off?: boolean; dark?: boolean }) => (
    <Icon $s={26} viewBox="0 0 26 26">
        <path d="M0 13 C5 2 21 2 26 13 C21 24 5 24 0 13Z" fill={off ? '#777' : dark ? '#10243c' : '#000'} />
        <path d="M2.5 13 C6 4.5 20 4.5 23.5 13 C20 21.5 6 21.5 2.5 13Z" fill={off ? '#999' : dark ? '#cfe4fa' : '#fff'} />
        <circle cx="13" cy="13" r="4.8" fill={off ? '#666' : dark ? '#10243c' : '#000'} />
        <circle cx="14.4" cy="11.6" r="1.3" fill={off ? '#888' : '#fff'} />
        {off && <path d="M4 1 L23 25" stroke="#f0f0f0" strokeWidth={2.4} />}
    </Icon>
);

interface TreeItem {
    label: string;
    level: number;
    icon: string;
    arrow?: 'down' | 'right';
    bold?: boolean;
    dim?: boolean;
    off?: boolean;
    sel?: boolean;
    hi?: boolean;
}

const TREE: TreeItem[] = [
    { label: 'Unnamed1', level: 0, icon: 'doc', arrow: 'down', bold: true },
    { label: 'Body', level: 1, icon: 'bodyIcon', arrow: 'down', bold: true, hi: true },
    { label: 'Origin', level: 2, icon: 'origin', arrow: 'right', dim: true, off: true },
    { label: 'Sketch', level: 2, icon: 'sketchIcon', sel: true },
    { label: 'VarSet', level: 1, icon: 'braces' },
    { label: 'Blend_Curve', level: 1, icon: 'blend' },
];

const ARROW_X = [7, 47, 85];
const EYE_GAP = [0, 18, 20];

const TreeLine = ({ item }: { item: TreeItem }) => (
    <TreeRow $sel={item.sel}>
        <ArrowSlot $ml={ARROW_X[item.level]}>
            {item.arrow === 'down' && <TriDown />}
            {item.arrow === 'right' && <TriRight />}
        </ArrowSlot>
        <TreeHighlight $on={item.hi}>
            {item.level > 0 && (
                <EyeSlot $ml={EYE_GAP[item.level]}>
                    <Eye off={item.off} dark={item.sel} />
                </EyeSlot>
            )}
            <TreeIconSlot $ml={item.level > 0 ? 8 : 12}>
                <ToolIcon name={item.icon} s={34} />
            </TreeIconSlot>
            <TreeLabel $bold={item.bold} $dim={item.dim}>
                {item.label}
            </TreeLabel>
        </TreeHighlight>
    </TreeRow>
);

type PropItem = { group: string } | { name: string; value: string; expand?: boolean };

const PROPS: PropItem[] = [
    { group: 'Attachment' },
    { name: 'Attacher Engine', value: 'Engine 3D' },
    { name: 'Attachment Support', value: 'XY_Plane (XY-...' },
    { name: 'Map Mode', value: 'FlatFace' },
    { name: 'Map Reversed', value: 'false' },
    { name: 'Attachment Offset', value: '[(0.00 0.00 1.0...', expand: true },
    { group: 'Base' },
    { name: 'Placement', value: '[(0.00 0.00 1.0...', expand: true },
    { name: 'Label', value: 'Sketch' },
    { group: 'Internal Geometry' },
    { name: 'Make Internals', value: 'false' },
    { group: 'Sketch' },
    { name: 'Constraints', value: '[10.00 mm]', expand: true },
    { name: 'External Geometry', value: '' },
    { name: 'Arc Fit Tolerance', value: '0.0000010000...' },
];

const PropLines = () => {
    let n = 0;
    return (
        <>
            {PROPS.map((p) => {
                if ('group' in p) {
                    n = 0;
                    return <GroupRow key={p.group}>{p.group}</GroupRow>;
                }
                n += 1;
                return (
                    <PropRow key={p.name} $alt={n % 2 === 1}>
                        <PropGutter>{p.expand && <TriRight />}</PropGutter>
                        <PropName>{p.name}</PropName>
                        <PropValue>{p.value}</PropValue>
                    </PropRow>
                );
            })}
        </>
    );
};

const CURVE =
    'M1233 1030 C1231 995 1229 960 1224.5 920 C1221 895 1218 875 1213 850 C1208 825 1204 810 1198 792 C1192 775 1187 765 1184 757 C1178 745 1172 735 1171 735 C1166 728 1160 722 1157 721 C1152 718 1148 718 1146 722 C1144 727 1147 736 1151 743 C1157 753 1163 760 1169 767 C1178 776 1188 785 1198 792 C1208 800 1220 806 1231 812 C1248 821 1264 828 1282 835 C1302 843 1324 849 1345 854 C1370 861 1396 866 1422 870 C1450 874 1477 876 1504 879 C1532 880 1560 880 1588 881';

const SketchLine = ({ x1, y1, x2, y2, c }: { x1: number; y1: number; x2: number; y2: number; c: string }) => (
    <>
        <line x1={x1} y1={y1} x2={x2} y2={y2} stroke={c} strokeWidth={2.4} shapeRendering="crispEdges" />
        <rect x={x1 - 2} y={y1 - 2} width={5} height={5} fill="#fff" />
        <rect x={x2 - 2} y={y2 - 2} width={5} height={5} fill="#fff" />
    </>
);

const NavCube = () => (
    <NavCubeBox viewBox="2105 283 145 150">
        <g fill="#6e6e6e">
            <path d="M2178 287 L2190 299 H2166Z" />
            <path d="M2178 418 L2190 402 H2166Z" />
            <path d="M2113 352 L2125 340 V364Z" />
            <path d="M2243 352 L2231 340 V364Z" />
            <path d="M2130 320 C2134 311 2140 305 2160 296 L2161 304 C2150 309 2145 314 2141 322 L2148 324 L2128 320Z" />
            <path d="M2226 320 C2222 311 2216 305 2196 296 L2195 304 C2206 309 2211 314 2215 322 L2208 324 L2227 320Z" />
            <ellipse cx="2235" cy="294" rx="6" ry="6" />
            <path d="M2222 388 L2232 393 V405 L2222 411 L2212 405 V393Z" />
        </g>
        <path d="M2158 321 H2198 L2210 333 V371 L2198 383 H2158 L2146 371 V333Z" fill="#6a6a6a" stroke="#4a4a4a" strokeWidth={1.4} />
        <path d="M2160 329 H2196 L2203 336 V368 L2196 376 H2160 L2153 368 V336Z" fill="none" stroke="#4e4e4e" strokeWidth={1.2} />
        <text x="2178" y="352" fill="#4a4a4a" fontSize="17" fontFamily="Liberation Sans, sans-serif" textAnchor="middle" transform="rotate(-90 2178 352)" dy="6">
            TOP
        </text>
        <path d="M2213 335 V385" stroke="#c8242c" strokeWidth={2} />
        <path d="M2161 387 H2212" stroke="#2ca02c" strokeWidth={3} />
    </NavCubeBox>
);

const AxisCross = () => (
    <AxisBox viewBox="2119 2244 70 75">
        <path d="M2176 2262 V2300" stroke="#6e1a1e" strokeWidth={1.6} />
        <path d="M2176 2258 L2180 2274 H2172Z" fill="#7e1a1e" />
        <path d="M2142 2307 H2170" stroke="#1c7a1c" strokeWidth={3} />
        <path d="M2128 2307 L2143 2299 V2315Z" fill="#1c7a1c" />
        <path d="M2176 2299 L2181 2307 L2176 2315 L2171 2307Z" fill="#20209a" />
        <g fontSize="8" fill="#000" fontFamily="Liberation Sans, sans-serif">
            <text x="2176" y="2256">x</text>
            <text x="2125" y="2304">y</text>
            <text x="2176" y="2306">z</text>
        </g>
    </AxisBox>
);

export default function App() {
    return (
        <Page>
            <GlobalStyle />
            <Defs />
            <Shadow>
                <Window>
                    <TitleBar>
                        <Lights>
                            <Light $c="#ff5f57">
                                <LightDot />
                            </Light>
                            <Light $c="#febc2e" />
                            <Light $c="#28c840" />
                        </Lights>
                        <TitleText>Unnamed1 - FreeCAD 1.0.1</TitleText>
                    </TitleBar>

                    <Toolbar $h={75}>
                        {renderTools(['grip', 'new', 'open', 'save', 'grip'])}
                        <ToolButton $w={62}>
                            <ToolIcon name="undo" />
                            <OverArrow $l={36} />
                        </ToolButton>
                        <ToolButton $w={62}>
                            <ToolIcon name="redo" />
                            <OverArrow $l={39} />
                        </ToolButton>
                        <VSep $ml={12} $mr={8} />
                        <ToolButton>
                            <ToolIcon name="refresh" />
                        </ToolButton>
                        <Grip $ml={14} />
                        <ToolButton>
                            <ToolIcon name="whats" />
                        </ToolButton>
                        <Grip $ml={15} $bright />
                        <WorkbenchCombo>
                            <ToolIcon name="wings" s={32} />
                            <ComboLabel>Curves</ComboLabel>
                            <ComboArrow />
                        </WorkbenchCombo>
                        <Grip />
                        <ToolButton $ml={-5}>
                            <ToolIcon name="fit" />
                        </ToolButton>
                        <ToolButton $w={66}>
                            <ToolIcon name="zoomsel" />
                        </ToolButton>
                        <ToolButton>
                            <ToolIcon name="isocube" />
                        </ToolButton>
                        <DropSlot $w={27}>
                            <DropArrow />
                        </DropSlot>
                        <ToolButton>
                            <ToolIcon name="plane" />
                        </ToolButton>
                        <VSep $ml={8} $mr={8} />
                        <ToolButton>
                            <ToolIcon name="draw" />
                        </ToolButton>
                        <DropSlot $w={27}>
                            <DropArrow />
                        </DropSlot>
                        <ToolButton>
                            <ToolIcon name="selbox" />
                        </ToolButton>
                        <DropSlot $w={22}>
                            <DropArrow />
                        </DropSlot>
                        <ToolButton>
                            <ToolIcon name="zoomre" />
                        </ToolButton>
                        <DropSlot $w={27}>
                            <DropArrow />
                        </DropSlot>
                        <ToolButton>
                            <ToolIcon name="measure" />
                        </ToolButton>
                    </Toolbar>

                    <Toolbar $h={72}>
                        {renderTools(ROW2)}
                        <Grip $ml={14} />
                        {renderTools(ROW2_END)}
                        <OverflowButton>
                            <Icon $s={18} viewBox="0 0 18 18">
                                <path d="M3 2 L8 9 L3 16 M10 2 L15 9 L10 16" fill="none" stroke="#2a2a2a" strokeWidth={1.8} />
                            </Icon>
                        </OverflowButton>
                    </Toolbar>

                    <Main>
                        <LeftDock>
                            <DockHeader>
                                <DockTitle $dx={-112}>Model</DockTitle>
                                <DockControls right={6} />
                            </DockHeader>
                            <TreeHeader>
                                <TreeHeaderCell $w={310}>Labels &amp; Attributes</TreeHeaderCell>
                                <TreeHeaderCell>Description</TreeHeaderCell>
                            </TreeHeader>
                            <Tree>
                                {TREE.map((item) => (
                                    <TreeLine key={item.label} item={item} />
                                ))}
                            </Tree>
                            <PropPanel>
                                <PropTable>
                                    <PropLines />
                                </PropTable>
                            </PropPanel>
                            <TabStrip>
                                <DockTab $w={78}>View</DockTab>
                                <DockTab $w={76} $active>
                                    Data
                                </DockTab>
                            </TabStrip>
                        </LeftDock>

                        <CenterColumn>
                            <Viewport>
                                <SketchCanvas viewBox="769 279 1482 2102">
                                    <path d={CURVE} fill="none" stroke="#1c1c1c" strokeWidth={2} />
                                    <SketchLine x1={1384} y1={882} x2={1690} y2={882} c="#6cf79a" />
                                    <SketchLine x1={1236} y1={1030} x2={1236} y2={1336} c="#6cf79a" />
                                    <SketchLine x1={1837} y1={1030} x2={1837} y2={1336} c="#f4f4f4" />
                                    <SketchLine x1={1384} y1={1483} x2={1690} y2={1483} c="#f4f4f4" />
                                </SketchCanvas>
                                <NavCube />
                                <AxisCross />
                            </Viewport>
                            <CenterTabs>
                                <DocTab $w={127}>
                                    <DocTabLabel>Start</DocTabLabel>
                                    <CloseX c="#8a8a8a" />
                                </DocTab>
                                <DocTab $w={304} $active>
                                    <ToolIcon name="doc" s={32} />
                                    <DocTabLabel $ml={18}>Unnamed1 : 1*</DocTabLabel>
                                    <CloseX c="#8a8a8a" />
                                </DocTab>
                            </CenterTabs>
                        </CenterColumn>

                        <RightDock>
                            <DockHeader>
                                <DockTitle $dx={-109}>Tasks</DockTitle>
                                <DockControls right={4} />
                            </DockHeader>
                            <TaskPane />
                        </RightDock>
                    </Main>

                    <StatusBar>
                        <StatusText>Angle: 90.00 mm, Total length: 41.28 mm</StatusText>
                        <StatusCombo $w={178} $ml={0}>
                            <Icon $s={28} viewBox="0 0 28 28">
                                <rect x="0" y="1" width="28" height="26" fill="url(#gYellow)" />
                                <path d="M4 3 L24 25 M24 3 L4 25" stroke="#a88c10" strokeWidth={1} />
                            </Icon>
                            <ComboValue $pl={2}>85</ComboValue>
                            <StatusArrow />
                        </StatusCombo>
                        <StatusCombo $w={218} $ml={14} $pl={18}>
                            <Icon $s={30} viewBox="0 0 30 30">
                                <rect x="3" y="2" width="24" height="26" rx="4" fill="none" stroke="#ccc" strokeWidth={2.4} />
                                <path d="M3 19 H27 M15 19 V28" stroke="#ccc" strokeWidth={2.4} />
                            </Icon>
                            <ComboValue>Touchpad</ComboValue>
                            <StatusArrow />
                        </StatusCombo>
                        <StatusCombo $w={331} $ml={13}>
                            <ComboValue $pl={6}>100.00 mm x 70.50 mm</ComboValue>
                            <StatusArrow />
                        </StatusCombo>
                    </StatusBar>

                    <ResizeGrip viewBox="0 0 26 26">
                        <g fill="#888">
                            <circle cx="22" cy="6" r="1.6" />
                            <circle cx="22" cy="12" r="1.6" />
                            <circle cx="16" cy="12" r="1.6" />
                            <circle cx="22" cy="18" r="1.6" />
                            <circle cx="16" cy="18" r="1.6" />
                            <circle cx="10" cy="18" r="1.6" />
                            <circle cx="16" cy="23" r="1.6" />
                            <circle cx="10" cy="23" r="1.6" />
                        </g>
                    </ResizeGrip>
                </Window>
            </Shadow>
        </Page>
    );
}
